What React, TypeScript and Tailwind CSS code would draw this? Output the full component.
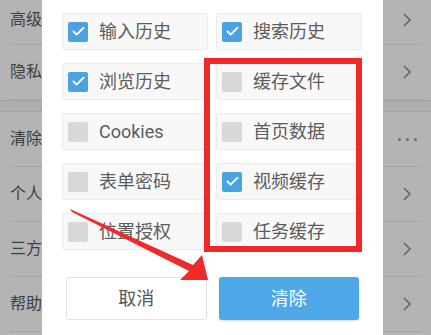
import { Check } from 'lucide-react';

type Option = { label: string; checked: boolean };

const options: Option[] = [
  { label: '输入历史', checked: true },
  { label: '搜索历史', checked: true },
  { label: '浏览历史', checked: true },
  { label: '缓存文件', checked: false },
  { label: 'Cookies', checked: false },
  { label: '首页数据', checked: false },
  { label: '表单密码', checked: false },
  { label: '视频缓存', checked: true },
  { label: '位置授权', checked: false },
  { label: '任务缓存', checked: false },
];

type Row = { label: string; trailing: 'chevron' | 'more' };

const topRows: Row[] = [
  { label: '高级设置', trailing: 'chevron' },
  { label: '隐私安全', trailing: 'chevron' },
];

const bottomRows: Row[] = [
  { label: '清除数据', trailing: 'more' },
  { label: '个人信息', trailing: 'chevron' },
  { label: '三方信息共享', trailing: 'chevron' },
  { label: '帮助反馈', trailing: 'chevron' },
];

function Chevron() {
  return (
    <svg width="10" height="16" viewBox="0 0 10 16" className="text-[#666]">
      <polyline points="2,2 8,8 2,14" fill="none" stroke="currentColor" strokeWidth="1.6" />
    </svg>
  );
}

function More() {
  return (
    <div className="flex gap-[5px]">
      <span className="h-[3px] w-[3px] rounded-full bg-[#6b6b6b]" />
      <span className="h-[3px] w-[3px] rounded-full bg-[#6b6b6b]" />
      <span className="h-[3px] w-[3px] rounded-full bg-[#6b6b6b]" />
    </div>
  );
}

function ListRow({ row, first }: { row: Row; first?: boolean }) {
  return (
    <div className={first ? 'h-[45px] px-[10px]' : 'h-[55px] px-[10px]'}>
      <div className="flex h-full items-center justify-between border-b border-[#a6a6a6]">
        <span className="text-[16px] text-[#3f3f3f]">{row.label}</span>
        <div className="flex w-[28px] justify-center">
          {row.trailing === 'chevron' ? <Chevron /> : <More />}
        </div>
      </div>
    </div>
  );
}

function OptionCell({ option }: { option: Option }) {
  return (
    <div className="flex h-[37px] items-center gap-[11px] rounded-[3px] border border-[#ebebeb] bg-[#f8f8f8] pl-[5px]">
      {option.checked ? (
        <div className="flex h-[20px] w-[20px] items-center justify-center rounded-[2px] bg-[#4aa3e0]">
          <Check className="h-[15px] w-[15px] text-white" strokeWidth={3} />
        </div>
      ) : (
        <div className="h-[20px] w-[20px] rounded-[2px] bg-[#d8d8d8]" />
      )}
      <span className="text-[18px] leading-none text-[#5c5c5c]">{option.label}</span>
    </div>
  );
}

export default function App() {
  return (
    <div
      className="relative h-[335px] w-[431px] overflow-hidden bg-[#b4b4b4]"
      style={{ fontFamily: 'Roboto, "Noto Sans CJK SC", sans-serif' }}
    >
      {/* list behind the dimmed overlay */}
      <div className="flex flex-col">
        <div className="-mt-[10px] h-[55px] px-[10px]">
          <div className="flex h-full items-center justify-between border-b border-[#a6a6a6] pt-[5px]">
            <span className="text-[16px] text-[#3f3f3f]">{topRows[0].label}</span>
            <div className="flex w-[28px] justify-center">
              <Chevron />
            </div>
          </div>
        </div>
        <ListRow row={topRows[1]} />
        <div className="h-[12px] border-y border-[#a2a2a2] bg-[#adadad]" />
        {bottomRows.map((row) => (
          <ListRow key={row.label} row={row} />
        ))}
      </div>

      {/* dialog */}
      <div className="absolute left-[42px] top-0 h-full w-[341px] bg-white">
        <div className="grid grid-cols-2 gap-x-[8px] gap-y-[13px] px-[20px] pl-[20px] pr-[21px] pt-[13px]">
          {options.map((option) => (
            <OptionCell key={option.label} option={option} />
          ))}
        </div>
        <div className="mt-[27px] grid grid-cols-2 gap-[12px] px-[24px]">
          <button className="h-[43px] rounded-[3px] border border-[#e2e2e2] bg-white text-[18px] text-[#555]">
            取消
          </button>
          <button className="h-[43px] rounded-[3px] bg-[#4ea8e7] text-[18px] text-white shadow-[0_1px_2px_rgba(0,0,0,0.15)]">
            清除
          </button>
        </div>

        {/* red highlight box */}
        <div className="absolute left-[162px] top-[58px] h-[194px] w-[158px] border-[6px] border-[#f0282a]" />
      </div>

      {/* annotation arrow */}
      <svg className="absolute left-0 top-0" width="431" height="335" viewBox="0 0 431 335">
        <polygon
          points="70,209 193,265 202,255 208,280 180,280 189,271 72,212"
          fill="#ee2a2a"
        />
      </svg>
    </div>
  );
}
